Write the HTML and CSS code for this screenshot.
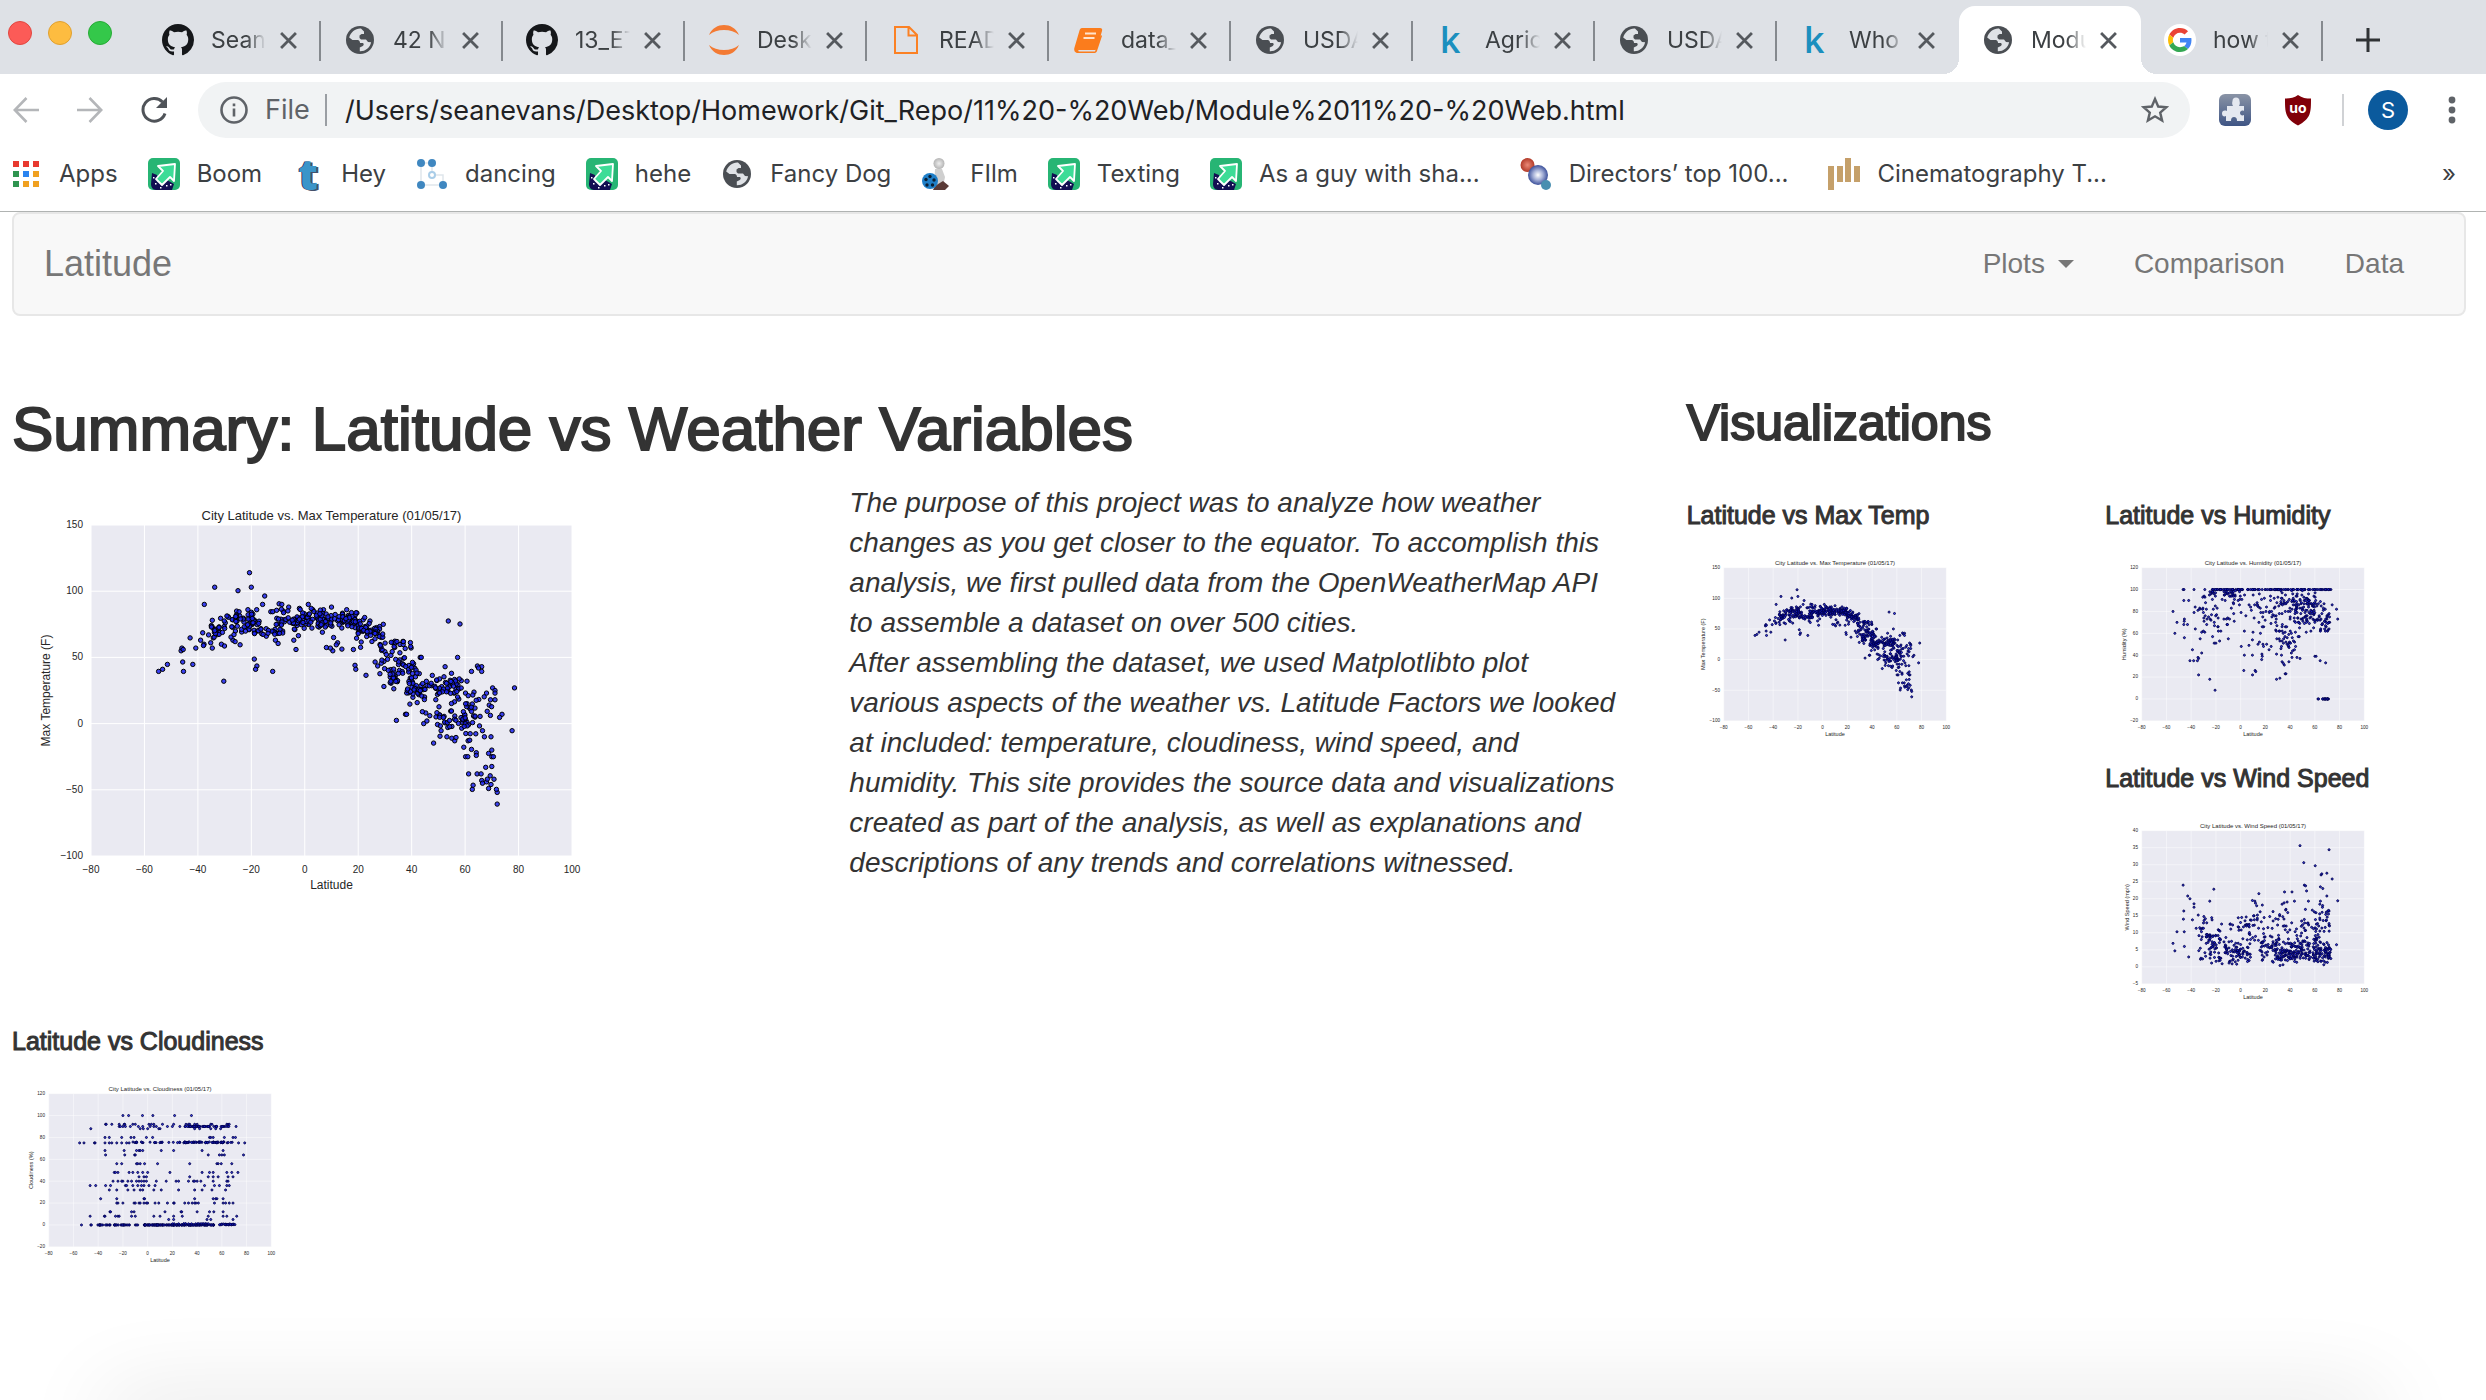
FILE: index.html
```html
<!DOCTYPE html>
<html lang="en">
<head>
<meta charset="utf-8">
<title>Latitude</title>
<link rel="stylesheet" href="styles.css">
</head>
<body>
<svg class="defs" aria-hidden="true">
  <defs>
    <linearGradient id="puzzle-bg" x1="0" y1="0" x2="0" y2="1"><stop offset="0" stop-color="#8a94a6"/><stop offset="1" stop-color="#3f5585"/></linearGradient>
    <radialGradient id="ball-red"><stop offset="0" stop-color="#ea8a78"/><stop offset="1" stop-color="#b23a28"/></radialGradient>
    <radialGradient id="ball-blue"><stop offset="0" stop-color="#ffffff"/><stop offset=".5" stop-color="#a3aed6"/><stop offset="1" stop-color="#3a4f9a"/></radialGradient>
    <radialGradient id="head-grey"><stop offset="0" stop-color="#eeeeee"/><stop offset="1" stop-color="#b5b5b5"/></radialGradient>
  </defs>
  <symbol id="i-github" viewBox="0 0 16 16"><path fill="#15171a" d="M8 0C3.58 0 0 3.58 0 8c0 3.54 2.29 6.53 5.47 7.59.4.07.55-.17.55-.38 0-.19-.01-.82-.01-1.49-2.01.37-2.53-.49-2.69-.94-.09-.23-.48-.94-.82-1.13-.28-.15-.68-.52-.01-.53.63-.01 1.08.58 1.23.82.72 1.21 1.87.87 2.33.66.07-.52.28-.87.51-1.07-1.78-.2-3.64-.89-3.64-3.95 0-.87.31-1.59.82-2.15-.08-.2-.36-1.02.08-2.12 0 0 .67-.21 2.2.82.64-.18 1.32-.27 2-.27s1.36.09 2 .27c1.53-1.04 2.2-.82 2.2-.82.44 1.1.16 1.92.08 2.12.51.56.82 1.27.82 2.15 0 3.07-1.87 3.75-3.65 3.95.29.25.54.73.54 1.48 0 1.07-.01 1.93-.01 2.2 0 .21.15.46.55.38A8.01 8.01 0 0 0 16 8c0-4.42-3.58-8-8-8z"/></symbol>
  <symbol id="i-globe" viewBox="0 0 32 32"><circle cx="16" cy="16" r="14" fill="#4a4e53"/><path fill="#dfe2e6" d="M17 4.500C12 4 6.500 8 5.200 13.500L8.500 16h5.500c1.500.5 2 1.500 2 3h3c1 .8 1 2-.2 3l-3 1.500v3.800c5.500.2 10.200-3.300 11.300-9l-3.100-.3-2-2.500h-5l-1.500-1.500v-2.500l2-1.500h2.500V7.500z"/></symbol>
  <symbol id="i-jupyter" viewBox="0 0 32 32"><path fill="#f37a33" d="M1 11C4 4 10 1 16 1s12 3 15 10c-4-3.500-9-5-15-5S5 7.500 1 11zM1 21c3 7 9 10 15 10s12-3 15-10c-4 3.500-9 5-15 5S5 24.500 1 21z"/></symbol>
  <symbol id="i-file" viewBox="0 0 32 32"><path fill="none" stroke="#fb8124" stroke-width="2" d="M5 3h14l8 8v18H5zM18.500 3v8.500H27"/></symbol>
  <symbol id="i-book" viewBox="0 0 32 32"><path fill="#fb7c1c" d="M10 4h18c2 0 2.600 1.400 2 3l-5 17c-.5 1.500-1.500 2-3 2H7c-1.500.4-1 1.500.5 1.500H23L29 11l1 1-5 15c-.6 1.500-1.500 2-3 2H6c-3 0-4.500-2.500-3.500-5.500L7.500 6.500C8 5 8.600 4 10 4z"/><path stroke="#ffe3cc" stroke-width="2" d="M13 9.500h11M11.500 14h11"/></symbol>
  <symbol id="i-google" viewBox="-8 -8 64 64"><circle cx="24" cy="24" r="32" fill="#fff"/><path fill="#ea4335" d="M24 9.500c3.540 0 6.710 1.220 9.210 3.600l6.850-6.850C35.900 2.380 30.470 0 24 0 14.620 0 6.510 5.380 2.560 13.220l7.980 6.190C12.430 13.720 17.740 9.500 24 9.500z"/><path fill="#4285f4" d="M46.980 24.550c0-1.570-.15-3.090-.38-4.550H24v9.020h12.940c-.58 2.960-2.260 5.480-4.780 7.180l7.730 6c4.510-4.180 7.090-10.360 7.090-17.650z"/><path fill="#fbbc05" d="M10.530 28.590c-.48-1.450-.76-2.990-.76-4.590s.27-3.140.76-4.590l-7.980-6.190C.92 16.460 0 20.120 0 24c0 3.880.92 7.540 2.560 10.780l7.970-6.190z"/><path fill="#34a853" d="M24 48c6.480 0 11.930-2.130 15.890-5.810l-7.730-6c-2.150 1.450-4.920 2.300-8.160 2.300-6.260 0-11.570-4.220-13.470-9.910l-7.980 6.190C6.510 42.620 14.620 48 24 48z"/></symbol>
  <symbol id="i-close" viewBox="0 0 16 16"><path stroke="#55595e" stroke-width="2.600" d="M1 1l14 14M15 1L1 15"/></symbol>
  <symbol id="i-arrow-tile" viewBox="0 0 32 32"><rect width="32" height="32" rx="5" fill="#27b574"/><path fill="#120e52" d="M4 15l5 2 0 7 7 1 3-3 7 4-2 6H8c-3 0-5-3-5-6z"/><path fill="#3ddc97" stroke="#fff" stroke-width="1.800" stroke-linejoin="round" d="M10 8l17-2-1 17-4-4-8 8-6-6 7-8z"/><path fill="#fff" d="M5 19h1.500v1.500H5zM7 25h1.500v1.500H7zM12 29h1.500v1.500H12zM18 27h1.500v1.500H18zM22 26h1.500v1.500H22z"/></symbol>
  <symbol id="i-nodes" viewBox="0 0 32 32"><g stroke="#dfe6ec" stroke-width="1.500" fill="none"><path d="M5 5v22h22V17H16V5z"/></g><g fill="#3f87c0"><circle cx="5" cy="5" r="4"/><circle cx="16" cy="5" r="4"/><circle cx="5" cy="27" r="4"/><circle cx="27" cy="27" r="4"/></g><circle cx="16" cy="17" r="3" fill="#fff" stroke="#a9cde8" stroke-width="2"/></symbol>
  <symbol id="i-film" viewBox="0 0 32 32"><path fill="#cfcfcf" d="M14 11h7l3 8-2 10h-9z"/><circle cx="18" cy="5.500" r="5.500" fill="url(#head-grey)"/><path fill="#5a3a36" d="M14 28l8-5 6 5-4 4H12z"/><circle cx="9" cy="23" r="8" fill="#1f7fc8"/><g fill="#0b2036"><circle cx="9" cy="18.500" r="1.700"/><circle cx="13" cy="22" r="1.700"/><circle cx="11.500" cy="27" r="1.700"/><circle cx="6" cy="27" r="1.700"/><circle cx="5" cy="21.500" r="1.700"/></g></symbol>
  <symbol id="i-balls" viewBox="0 0 32 32"><circle cx="7.500" cy="7" r="7" fill="url(#ball-red)"/><circle cx="18" cy="17" r="10" fill="url(#ball-blue)"/><circle cx="26" cy="27" r="5" fill="#4a8fb0"/></symbol>
  <symbol id="i-bars" viewBox="0 0 32 32"><path fill="#c5a06a" d="M0 8h6v24H0zM9 8h6v16H9zM17 0h6v24h-6zM26 8h6v16h-6z"/></symbol>
  <symbol id="i-apps" viewBox="0 0 26 26"><path fill="#e8392f" d="M0 0h6v6H0zM10 0h6v6h-6zM20 0h6v6h-6z"/><path fill="#2f9450" d="M0 10h6v6H0zM0 20h6v6H0z"/><path fill="#2a84f0" d="M10 10h6v6h-6z"/><path fill="#f0a020" d="M20 10h6v6h-6zM10 20h6v6h-6zM20 20h6v6h-6z"/></symbol>
</svg>

<header class="chrome">
  <div class="tabstrip">
    <div class="lights"><i class="light red"></i><i class="light amber"></i><i class="light green"></i></div>
    <nav class="tabs" aria-label="Tabs">
      <div class="tab"><svg class="favicon"><use href="#i-github"/></svg><span class="tab-title">Sean</span><button class="close" aria-label="Close tab"><svg><use href="#i-close"/></svg></button></div>
      <div class="tab"><svg class="favicon"><use href="#i-globe"/></svg><span class="tab-title">42 N</span><button class="close" aria-label="Close tab"><svg><use href="#i-close"/></svg></button></div>
      <div class="tab"><svg class="favicon"><use href="#i-github"/></svg><span class="tab-title">13_ET</span><button class="close" aria-label="Close tab"><svg><use href="#i-close"/></svg></button></div>
      <div class="tab"><svg class="favicon"><use href="#i-jupyter"/></svg><span class="tab-title">Desk</span><button class="close" aria-label="Close tab"><svg><use href="#i-close"/></svg></button></div>
      <div class="tab"><svg class="favicon"><use href="#i-file"/></svg><span class="tab-title">READ</span><button class="close" aria-label="Close tab"><svg><use href="#i-close"/></svg></button></div>
      <div class="tab"><svg class="favicon"><use href="#i-book"/></svg><span class="tab-title">data_</span><button class="close" aria-label="Close tab"><svg><use href="#i-close"/></svg></button></div>
      <div class="tab"><svg class="favicon"><use href="#i-globe"/></svg><span class="tab-title">USDA</span><button class="close" aria-label="Close tab"><svg><use href="#i-close"/></svg></button></div>
      <div class="tab"><span class="favicon kaggle">k</span><span class="tab-title">Agric</span><button class="close" aria-label="Close tab"><svg><use href="#i-close"/></svg></button></div>
      <div class="tab"><svg class="favicon"><use href="#i-globe"/></svg><span class="tab-title">USDA</span><button class="close" aria-label="Close tab"><svg><use href="#i-close"/></svg></button></div>
      <div class="tab before-active"><span class="favicon kaggle">k</span><span class="tab-title">Who</span><button class="close" aria-label="Close tab"><svg><use href="#i-close"/></svg></button></div>
      <div class="tab active"><svg class="favicon"><use href="#i-globe"/></svg><span class="tab-title">Modu</span><button class="close" aria-label="Close tab"><svg><use href="#i-close"/></svg></button></div>
      <div class="tab"><svg class="favicon"><use href="#i-google"/></svg><span class="tab-title">how t</span><button class="close" aria-label="Close tab"><svg><use href="#i-close"/></svg></button></div>
    </nav>
    <button class="new-tab" aria-label="New tab"><svg viewBox="0 0 24 24"><path stroke="#2f3235" stroke-width="3" d="M12 0v24M0 12h24"/></svg></button>
  </div>

  <div class="toolbar">
    <button class="tool" aria-label="Back"><svg viewBox="0 0 26 26"><path fill="none" stroke="#b4b6b9" stroke-width="2.600" d="M26 13H2M13.500 1L1.800 13l11.700 12"/></svg></button>
    <button class="tool" aria-label="Forward"><svg viewBox="0 0 26 26"><path fill="none" stroke="#b4b6b9" stroke-width="2.600" d="M0 13h24M12.500 1l11.700 12-11.700 12"/></svg></button>
    <button class="tool" aria-label="Reload"><svg viewBox="0 0 26 26"><path fill="none" stroke="#4f5358" stroke-width="3" d="M24 16.500A11.300 11.300 0 1 1 21.500 5"/><path fill="#4f5358" d="M26 0v11H15z"/></svg></button>
    <div class="omnibox">
      <svg class="info" viewBox="0 0 28 28"><circle cx="14" cy="14" r="12.500" fill="none" stroke="#5f6368" stroke-width="2.600"/><path stroke="#5f6368" stroke-width="2.600" d="M14 12.500v8M14 7.500v2.700"/></svg>
      <label class="scheme" for="url">File</label>
      <input id="url" class="url" type="text" value="/Users/seanevans/Desktop/Homework/Git_Repo/11%20-%20Web/Module%2011%20-%20Web.html">
      <button class="star" aria-label="Bookmark this page"><svg viewBox="0 0 28 28"><path fill="none" stroke="#5f6368" stroke-width="2.400" d="M14 3l3.200 7.500 8.200.7-6.200 5.400 1.900 8L14 20.300l-7.100 4.300 1.900-8-6.200-5.400 8.200-.7z"/></svg></button>
    </div>
    <button class="ext puzzle" aria-label="Extension"><svg viewBox="0 0 32 32"><rect width="32" height="32" rx="6" fill="url(#puzzle-bg)"/><path fill="#e4e8f0" d="M8 12h6c-1-2-1-3-.5-5a3.500 3.500 0 0 1 7 0c.5 2 .5 3-.5 5h5v5c-2-1-4 0-4 2s2 3 4 2v6h-7c0-3-1-4-3-4s-3 1-3 4H7v-5c-2 1-4 0-4-2.500S5 16 8 17z"/></svg></button>
    <button class="ext shield" aria-label="Content blocker"><svg viewBox="0 0 32 32"><path fill="#800009" d="M16 1c4 3 8 3.500 13 3.500 0 14 0 20-13 27C3 24.500 3 18.500 3 4.500 8 4.500 12 4 16 1z"/><text x="16" y="19" text-anchor="middle" class="shield-text">uo</text></svg></button>
    <span class="bar"></span>
    <button class="avatar" aria-label="Profile">S</button>
    <button class="dots" aria-label="Menu"><svg viewBox="0 0 8 28"><g fill="#5f6368"><circle cx="4" cy="4" r="3.400"/><circle cx="4" cy="14" r="3.400"/><circle cx="4" cy="24" r="3.400"/></g></svg></button>
  </div>

  <nav class="bookmarks" aria-label="Bookmarks">
    <a href="#" class="mark apps"><svg><use href="#i-apps"/></svg>Apps</a>
    <a href="#" class="mark"><svg><use href="#i-arrow-tile"/></svg>Boom</a>
    <a href="#" class="mark"><span class="tumblr">t</span>Hey</a>
    <a href="#" class="mark"><svg><use href="#i-nodes"/></svg>dancing</a>
    <a href="#" class="mark"><svg><use href="#i-arrow-tile"/></svg>hehe</a>
    <a href="#" class="mark"><svg><use href="#i-globe"/></svg>Fancy Dog</a>
    <a href="#" class="mark"><svg><use href="#i-film"/></svg>FIlm</a>
    <a href="#" class="mark"><svg><use href="#i-arrow-tile"/></svg>Texting</a>
    <a href="#" class="mark long"><svg><use href="#i-arrow-tile"/></svg>As a guy with sha...</a>
    <a href="#" class="mark long"><svg><use href="#i-balls"/></svg>Directors’ top 100...</a>
    <a href="#" class="mark"><svg><use href="#i-bars"/></svg>Cinematography T...</a>
    <button class="more" aria-label="More bookmarks">»</button>
  </nav>
</header>

<div class="page">
  <nav class="navbar">
    <a href="#" class="brand">Latitude</a>
    <div class="links">
      <button class="link">Plots <span class="caret"></span></button>
      <a href="#" class="link">Comparison</a>
      <a href="#" class="link">Data</a>
    </div>
  </nav>

  <main class="content">
    <section class="summary">
      <h1>Summary: Latitude vs Weather Variables</h1>
      <div class="halves">
        <svg class="chart big" data-kind="temp" viewBox="0 0 600 417" role="img" aria-label="Max temperature by latitude"></svg>
        <p>The purpose of this project was to analyze how weather changes as you get closer to the equator. To accomplish this analysis, we first pulled data from the OpenWeatherMap API to assemble a dataset on over 500 cities.<br>After assembling the dataset, we used Matplotlibto plot various aspects of the weather vs. Latitude Factors we looked at included: temperature, cloudiness, wind speed, and humidity. This site provides the source data and visualizations created as part of the analysis, as well as explanations and descriptions of any trends and correlations witnessed.</p>
      </div>
    </section>
    <section class="visuals">
      <h2>Visualizations</h2>
      <div class="halves">
        <article class="plot"><h4>Latitude vs Max Temp</h4><svg class="chart" data-kind="temp" viewBox="0 0 600 417" role="img" aria-label="Max temperature by latitude"></svg></article>
        <div>
          <article class="plot"><h4>Latitude vs Humidity</h4><svg class="chart" data-kind="humidity" viewBox="0 0 600 417" role="img" aria-label="Humidity by latitude"></svg></article>
          <article class="plot"><h4>Latitude vs Wind Speed</h4><svg class="chart" data-kind="wind" viewBox="0 0 600 417" role="img" aria-label="Wind speed by latitude"></svg></article>
        </div>
      </div>
    </section>
    <article class="plot"><h4>Latitude vs Cloudiness</h4><svg class="chart" data-kind="cloud" viewBox="0 0 600 417" role="img" aria-label="Cloudiness by latitude"></svg></article>
  </main>
</div>
<div class="edge-shadow"></div>
<script src="charts.js"></script>
</body>
</html>
```

FILE: styles.css
```css
* { box-sizing: border-box; }
body { margin: 0; min-height: 100vh; background: #fff; color: #333; font-family: "Liberation Sans", Arial, sans-serif; overflow: hidden; }
button { border: 0; padding: 0; background: none; font: inherit; color: inherit; display: block; }
a { color: inherit; text-decoration: none; }
svg { display: block; }
.defs { position: absolute; width: 0; height: 0; }

/* Browser window */
.chrome { font-family: Inter, sans-serif; font-size: 24px; color: #3c4043; border-bottom: 1px solid #b0b3b2; }
.tabstrip { display: flex; align-items: flex-end; height: 74px; background: #dee1e6; }
.lights { display: flex; gap: 16px; width: 132px; padding: 0 8px; margin-bottom: 29px; }
.light { width: 24px; height: 24px; border-radius: 50%; border: 1px solid; }
.red { background: #fc5b57; border-color: #e2463f; }
.amber { background: #fdbc40; border-color: #e0a02f; }
.green { background: #34c84a; border-color: #26ab35; }
.tabs { display: flex; padding-left: 7px; font-size: 23px; }
.tab { position: relative; display: flex; align-items: center; width: 182px; height: 68px; padding: 0 24px 0 23px; }
.tab::after { content: ""; position: absolute; right: 0; top: 15px; width: 2px; height: 40px; background: #85898e; }
.active::after, .before-active::after { display: none; }
.active { background: #fff; border-radius: 16px 16px 0 0; }
.active::before { content: ""; position: absolute; left: -16px; right: -16px; bottom: 0; height: 16px;
  background: radial-gradient(circle at 0 0, transparent 16px, #fff 16px) left / 16px 16px no-repeat, radial-gradient(circle at 100% 0, transparent 16px, #fff 16px) right / 16px 16px no-repeat; }
.favicon { width: 32px; height: 32px; flex: none; }
.kaggle { font: 36px/32px "Open Sans", sans-serif; font-weight: 600; color: #1b8fbe; text-align: center; padding-right: 4px; }
.tab-title { width: 55px; margin-left: 17px; line-height: 30px; overflow: hidden; white-space: nowrap; -webkit-mask-image: linear-gradient(90deg, #000 65%, transparent); mask-image: linear-gradient(90deg, #000 65%, transparent); }
.close { margin-left: auto; }
.close svg { width: 17px; height: 17px; }
.new-tab { margin: 0 0 22px 33px; }
.new-tab svg { width: 24px; height: 24px; }

.toolbar { display: flex; align-items: center; height: 72px; padding: 0 30px 0 13px; }
.tool { width: 26px; margin-right: 38px; }
.tool svg { width: 26px; height: 26px; }
.tool + .tool + .tool { margin-right: 31px; }
.omnibox { flex: 1; display: flex; align-items: center; height: 56px; border-radius: 28px; background: #f1f3f4; padding: 0 21px 0 22px; font-size: 27px; }
.info { width: 28px; height: 28px; }
.scheme { width: 62px; margin-left: 17px; border-right: 2px solid #9a9ea3; line-height: 32px; color: #5f6368; }
.url { flex: 1; min-width: 0; border: 0; padding: 0 0 0 18px; background: none; font: inherit; color: #202124; outline: none; }
.star svg { width: 28px; height: 28px; }
.ext svg { width: 32px; height: 32px; }
.puzzle { margin-left: 29px; }
.shield { margin-left: 31px; }
.shield-text { font: bold 14px Inter, sans-serif; fill: #fff; }
.bar { width: 2px; height: 32px; margin: 0 24px 0 28px; background: #d0d2d5; }
.avatar { width: 40px; height: 40px; border-radius: 50%; background: #0b5a9d; color: #fff; font-size: 22px; }
.dots { margin-left: 40px; }
.dots svg { width: 8px; height: 28px; }

.bookmarks { display: flex; align-items: center; height: 65px; padding: 0 30px 10px 13px; }
.mark { display: flex; align-items: center; gap: 17px; margin-right: 30px; white-space: nowrap; }
.mark svg { width: 32px; height: 32px; }
.mark.apps { gap: 20px; }
.mark.apps svg { width: 26px; height: 26px; }
.long { margin-right: 40px; }
.tumblr { width: 32px; font: 800 42px/32px "Open Sans", sans-serif; color: #3a95c9; text-align: center; text-shadow: 2px 1px 0 #44506a, -1px 0 0 #2b3a5c; }
.more { margin-left: auto; }

/* Page */
.page { padding: 0 20px 0 12px; }
.navbar { display: flex; justify-content: space-between; align-items: center; height: 104px; padding: 0 30px; background: #f8f8f8; border: 2px solid #e7e7e7; border-radius: 8px; color: #777; }
.brand { font-size: 36px; line-height: 40px; }
.links { display: flex; }
.link { display: flex; align-items: center; gap: 13px; padding: 0 30px; font-size: 28px; line-height: 40px; }
.caret { border: 8px solid transparent; border-top-color: #777; border-bottom: 0; }
.content { display: grid; grid-template-columns: 2fr 1fr; margin-right: -58px; padding-top: 79px; }
.halves { display: grid; grid-template-columns: 1fr 1fr; }
h1, h2, h4 { margin: 0; font-weight: 400; -webkit-text-stroke: 2px #333; }
h1 { font-size: 62px; line-height: 68px; margin-bottom: 20px; }
h2 { font-size: 50px; line-height: 56px; margin-bottom: 50px; }
h4 { font-size: 25px; line-height: 28px; margin-bottom: 22px; -webkit-text-stroke-width: 1px; }
p { margin: 0; padding-right: 64px; font-size: 28px; line-height: 40px; font-style: italic; }
.plot { margin-bottom: 20px; }
.chart { width: 278px; height: 193px; }
.big { width: 600px; height: 417px; margin-top: 6px; }
.chart text { fill: #262626; font-size: 12px; }
.chart .tick { font-size: 10px; }
.chart .title { font-size: 13px; }
.chart circle { fill: #1a22f0; fill-opacity: .85; stroke: #000; stroke-width: 1; }
.chart:not(.big) circle { stroke-width: 2; stroke: #00004a; }
.edge-shadow { position: fixed; left: 105px; right: 105px; bottom: -40px; height: 40px; box-shadow: 0 0 90px rgba(0, 0, 0, .14); }
```

FILE: charts.js
```js
// Scatter plots of weather variables by city latitude.
const NS = 'http://www.w3.org/2000/svg';
const AREA = { x: 79, y: 36, w: 481, h: 331 };

function random(seed) {
  return () => {
    seed = (seed * 1664525 + 1013904223) % 4294967296;
    return seed / 4294967296;
  };
}

// Points spread round the line from (x0, y0) to (x1, y1).
function band(rnd, n, x0, x1, y0, y1, spread) {
  const out = [];
  for (let i = 0; i < n; i++) {
    const t = rnd();
    const off = (rnd() + rnd() - 1) * spread;
    out.push([x0 + (x1 - x0) * t, y0 + (y1 - y0) * t + off]);
  }
  return out;
}

function temperature() {
  const r = random(7);
  return [
    [-20.7,114],[-33.7,103],[-20,103],[-25,100.4],[-15,96.4],[-37.6,90],[-15.8,90],[-9.6,90.5],[-8.6,90],[1.3,90],[-6,88],[10,88],
    [-54.7,39.4],[-53.2,41],[-51.4,44.7],[-45.7,46.5],[-41.9,44.7],[-45.4,39.4],[-46.3,55],[-46,57],[-45.5,56],[-40.8,57],[-42.9,64.7],[-39,63],[-37.7,60],[-35.2,61],[-34.6,57],[-31.2,60],[-30.3,32],[-38.2,68.6],
    [-18.9,48.7],[-17.9,43.5],[-18.4,41],[-12,39.4],[-3.3,56],[-4.1,63],[-2.4,66.4],[-24.2,59.5],[-26.9,63],[-10,60.5],[-11,63],
    [13.9,56.3],[18.2,56],[10.5,55],[8.1,57.5],[9.6,57],[12.3,61],[11.8,59.5],[10.8,65],[6.6,69],[18.8,44],[19.1,41],[22.9,36.5],[20.9,57.6],[21.1,61.6],[19.4,64.5],
    [26.3,46.5],[27.3,43.5],[28.1,37.7],[29.6,28],[33.3,26.3],[34.3,2.4],[37.7,7],[38.1,7],[29.4,75],[24.4,77.5],[53.7,77.5],[58.1,75.2],[57.2,50],[43.2,50],[43.6,50],[52.5,43],[54.9,38],
    [62.4,39.4],[64.6,43.5],[66.2,43],[66.2,39.4],[65,42],[60.7,32],[78.5,27],[77.6,-5.4],[73.8,7],[72.9,4.7],[70.3,27],[71.2,25],[71.2,23],[71.2,18],[68,23],[69.5,18],[69,14],
    [72,-60.8],[72,-52],[71.7,-49.7],[62.7,-49.7],[63,-46.5],[61.3,-38],[64.5,-38],[66,-38],[67.7,-33],[70,-32.4],[69.4,-39.4],[70.8,-42],[66.2,-43],[66.5,-45],[68,-44],[68.3,-42],[69.7,-46],[68.8,-49],
    [60.2,-25],[61,-25],[64.2,-22],[64.2,-24],[62.4,-19.5],[59.5,-17.8],[68.8,-22.5],[70,-20],[70,-25],[70.6,-25],[48.2,-14.7],[69.7,-10],[67.2,-10],[66.5,-5.4],[64,-7.7],[61.1,-13],[61.7,-12.5],
    [56.1,-13],[55,-11],[56.6,-10.5],[53.2,-10],[50.6,-9.5],[44.5,0],[45.7,2],[45.3,8],[46.8,6],[44,9],
    [-37.9,59],[-36,67],[-35,74],[-34.6,78],[-31.5,79.500],[-28.800,81],[-25.500,85],[-21.300,86],[-18,86],[-12.700,84.500],[-12,84.500],[7,86],[3,86],[15.700,86],[-2,87],[-8,85],
    ...band(r, 16, -35.5, -32, 70, 70, 6),
    ...band(r, 36, -33, -17, 70, 76, 13),
    ...band(r, 26, -26, -19, 79, 80, 7),
    ...band(r, 24, -19, -8, 69, 70, 6),
    ...band(r, 75, -11, 6, 79, 79, 9),
    ...band(r, 55, 4, 20, 79, 79, 8),
    ...band(r, 24, 14, 20, 80, 78, 6),
    ...band(r, 48, 20, 29, 74, 65, 9),
    ...band(r, 56, 28, 43, 57, 37, 18),
    ...band(r, 16, 31, 35, 36, 34, 6),
    ...band(r, 12, 32, 40, 62, 60, 4),
    ...band(r, 36, 38, 46, 25, 24, 11),
    ...band(r, 44, 45, 59, 31, 28, 7),
    ...band(r, 42, 49, 64, 4, 2, 12),
    ...band(r, 20, 48, 66, 18, 18, 11),
    ...band(r, 18, 58, 70, 8, 10, 20)
  ];
}

function humidity() {
  const r = random(21);
  const cap = p => [p[0], Math.min(100, Math.round(p[1]))];
  return [
    [-54.7,80],[-53.2,60],[-51.5,70],[-46.5,100],[-45.8,100],[-37.7,100],[-29,100],[-46,90],[-42,90],[-45.5,73],[-45.6,71],[-46,68],[-43,68],[-45.5,56],[-39,45],[-41,35],[-38,35],[-35,35],[-34,37],[-34.5,38],[-31.5,42],[-34,22],[-25,18],[-20.7,8],[-21.4,51],[-20,51],[-17,53],[-10,55],
    [.5,48],[3,40],[9.5,40],[6.7,49],[2.500,26],[9.6,22],[11.7,26],[12.2,25],[17,36],[17.5,39],[17.2,41],[14,50],[18,50],[18.5,48],[21,50],[23,45],[9.5,54],[29,41],[29,18],[31.7,19],[33,48],[33,40],[33.5,34],[34.5,32.5],[35.3,31],[36,23],[36.6,23],[39,34],[36.6,52],[39,51],[42,44],[41,42],[41.5,38],[43.5,45],[45.5,38],[48,37],[60,39],[61,39],[64.3,35],[68.7,33],
    [62.5,0],[63,0],[77.5,82],[78.5,73],[74,86],[73,100],[-31.5,61],[-29,61],[-18,62],[-16,62],[3,62],[10,61],[16,60],
    ...band(r, 14, 65.5, 72.5, 0, 0, 0),
    ...band(r, 110, -23, 73, 100, 100, 0),
    ...band(r, 40, -26, 5, 96, 96, 7).map(cap),
    ...band(r, 24, -38, -18, 84, 84, 24).map(cap),
    ...band(r, 24, -36, -4, 72, 74, 18).map(cap),
    ...band(r, 40, -12, 34, 88, 84, 24).map(cap),
    ...band(r, 42, 14, 48, 68, 66, 24).map(cap),
    ...band(r, 14, 27, 45, 54, 52, 10).map(cap),
    ...band(r, 62, 28, 68, 90, 88, 12).map(cap),
    ...band(r, 48, 40, 60, 85, 80, 15).map(cap),
    ...band(r, 66, 44, 72, 74, 71, 17).map(cap)
  ];
}

function wind() {
  const r = random(5);
  const up = p => [p[0], Math.max(p[1], 1 + p[0] % 1)];
  return [
    [48,35.6],[71.5,34.4],[51,30.6],[60.3,29.7],[65,27],[65.6,27.3],[69.7,27.5],[74,25.8],[51.5,24],[52.500,23.8],[64.5,23.5],[66.4,23],[53.3,22.3],[35.5,22],[41.5,22],[14.7,21.5],[69.7,20.8],[78.5,19.4],[-46.5,24],[-42.8,20.8],[-41,20],[-21.7,22.8],[-25,19.3],[-37.7,18.5],[-37.7,17.5],[-46,16.4],[-46.3,14],[-39,13.8],[-51.5,10.3],[-45.6,10.3],[-54.7,6.9],[-53.2,4.7],[-45.5,6],[-42,2.9],[9.5,19.5],[11.5,19.3],[12,18.700],[33.5,18.4],[43.5,19.3],[54.8,19.3],[64.5,19.3],[64,18.4],[66.3,18],[77.5,6.5],[71,15.5],[70,14.6],[31.8,.4],[34.2,.6],[67.2,.6],[-15,.9],[-23.5,1.1],
    ...band(r, 45, -36, -15, 12, 10, 8),
    ...band(r, 18, -25, -19, 7, 7, 3),
    ...band(r, 18, -36, -14, 3, 3, 2).map(up),
    ...band(r, 75, -14, 8, 4.5, 4, 4.500).map(up),
    ...band(r, 24, -10, 14, 11, 13, 4),
    ...band(r, 36, 5, 30, 11, 12, 7),
    ...band(r, 100, 15, 50, 5, 5, 4.500).map(up),
    ...band(r, 40, 28, 46, 3.5, 3.5, 2).map(up),
    ...band(r, 90, 48, 73, 5, 4.500, 4.500).map(up),
    ...band(r, 22, 50, 73, 3, 3, 1.500),
    ...band(r, 90, 30, 72, 12, 12, 8)
  ];
}

function cloudiness() {
  const r = random(12);
  const row = (y, xs) => xs.map(x => [x, y]);
  return [
    ...row(100, [-20,-15.4,-4.2,4.2,21.8,35.4]),
    ...row(92, [-34,-33.5,-29,-23,-19,-18.500,-12,-10,1,3,5,12,21,31,33,34,38,40,51,52,64,65,66]),
    ...row(88, [-46,-6,-3.500,0,9,10,38,42,51,55,59]),
    ...row(90, [-23,-22,-20,-18,-14,-7.500,-4,2,5,7,16,20,26,71.500]), ...band(r, 50, 30, 66, 90, 90, 0),
    ...row(80, [-34.500,-31,-21,-13.500,-11,-1,4,50,51,53,62,69,71]),
    ...row(75, [-55,-51.500,-43,-42.500,-34.500,-31,-29,-25,-21,-17,-15,78.500,73.5]), ...band(r, 24, -12, 30, 75.500, 75.500, .5), ...band(r, 54, 30, 70, 75.500, 75.500, .5),
    ...row(68, [-34.500,-19,-9,-7,-6,-4,11,21,44,61]), ...row(64, [-34,-18.500,-10.500,-10,49,58,60,62,77.500]),
    ...row(56, [-25,-21,-9,-8,-6,-2.500,8,34,56,57,59.500,68]), ...row(48, [-27,-26,-24,-15,-12,-8,-4,0,18,44,50,53,64,68,73]),
    ...row(44, [-7,-3,-1,34,49,53,57,65,69]), ...row(40, [-28,-24,-21,-20,-16,-13,-9,-7,-5,-3,-1,7,15,23,25,33,37,38,40,43,53,64,65]),
    ...row(36, [-46.500,-42,-34,-30,-18,-17,-12,-8,-5,-3,1,6,46,54,58,64,66]), ...row(32, [-31,-25,-16,-11,-6,-4,5,11,25,38,44,52,63]),
    ...row(24, [-38,-25,-3,-2.500,38,53,55,56,61]), ...row(20, [-25,-24,-20,-11,-10,-7,-6,-3,-1,0,6,9,16,21,21.500,30,33,36,38,39,41,54,61,63,66,69]),
    ...row(12, [-30.500,-30,-13,-11,14,27,27.500,40,50,53.500,61]), ...row(8, [-46.500,-35,-34.500,-26,-24,-23,-13,-10,5,10,21,28,49,61,64,72]), ...row(5, [17,21,48,51,69]),
    ...row(0, [-53.500,-46,-45.500]), ...band(r, 34, -41, -14, 0, 0, 0), ...row(0, [-10,-9,-8]), ...band(r, 130, -3, 54, 0, 0, 0), ...band(r, 20, 20, 50, 1, 1, 0), ...band(r, 24, 58, 72, .5, .5, .5)
  ];
}

const KINDS = {
  temp: { title: 'City Latitude vs. Max Temperature (01/05/17)', label: 'Max Temperature (F)', min: -100, max: 150, step: 50, labelX: 34, points: temperature() },
  humidity: { title: 'City Latitude vs. Humidity (01/05/17)', label: 'Humidity (%)', min: -20, max: 120, step: 20, labelX: 41, points: humidity() },
  wind: { title: 'City Latitude vs. Wind Speed (01/05/17)', label: 'Wind Speed (mph)', min: -5, max: 40, step: 5, labelX: 48, points: wind() },
  cloud: { title: 'City Latitude vs. Cloudiness (01/05/17)', label: 'Cloudiness (%)', min: -20, max: 120, step: 20, labelX: 41, points: cloudiness() }
};

function add(svg, name, attrs, text) {
  const el = document.createElementNS(NS, name);
  for (const key in attrs) el.setAttribute(key, attrs[key]);
  if (text !== undefined) el.textContent = text;
  svg.appendChild(el);
}

function draw(svg) {
  const k = KINDS[svg.dataset.kind];
  const px = x => AREA.x + (x + 80) / 180 * AREA.w;
  const py = y => AREA.y + (k.max - y) / (k.max - k.min) * AREA.h;
  const sign = v => String(v).replace('-', '−');
  const right = AREA.x + AREA.w, bottom = AREA.y + AREA.h;
  const midX = AREA.x + AREA.w / 2, midY = AREA.y + AREA.h / 2;
  add(svg, 'rect', { x: AREA.x, y: AREA.y, width: AREA.w, height: AREA.h, fill: '#eaeaf2' });
  for (let x = -80; x <= 100; x += 20) {
    add(svg, 'path', { d: `M${px(x)} ${AREA.y}V${bottom}`, stroke: '#fff' });
    add(svg, 'text', { x: px(x), y: bottom + 17, 'text-anchor': 'middle', class: 'tick' }, sign(x));
  }
  for (let y = k.min; y <= k.max; y += k.step) {
    add(svg, 'path', { d: `M${AREA.x} ${py(y)}H${right}`, stroke: '#fff' });
    add(svg, 'text', { x: AREA.x - 8, y: py(y) + 3, 'text-anchor': 'end', class: 'tick' }, sign(y));
  }
  for (const [x, y] of k.points) add(svg, 'circle', { cx: px(x).toFixed(1), cy: py(y).toFixed(1), r: 2.2 });
  add(svg, 'text', { x: midX, y: AREA.y - 5, 'text-anchor': 'middle', class: 'title' }, k.title);
  add(svg, 'text', { x: midX, y: bottom + 33, 'text-anchor': 'middle' }, 'Latitude');
  add(svg, 'text', { x: k.labelX, y: midY, 'text-anchor': 'middle', transform: `rotate(-90 ${k.labelX} ${midY})`, dy: 4 }, k.label);
}

document.querySelectorAll('.chart').forEach(draw);
```
